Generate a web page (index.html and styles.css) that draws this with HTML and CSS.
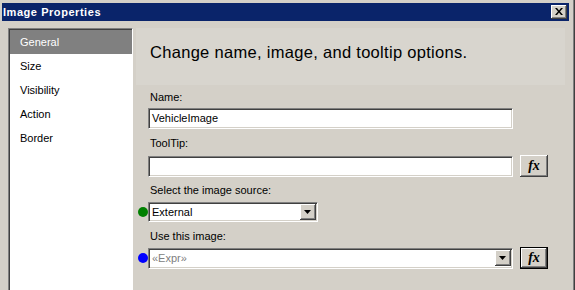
FILE: index.html
```html
<!DOCTYPE html>
<html>
<head>
<meta charset="utf-8">
<link rel="stylesheet" href="styles.css">
</head>
<body>
<div class="window">
  <div class="titlebar">
    <span class="title">Image Properties</span>
    <span class="close"><svg width="8" height="7" viewBox="0 0 8 7"><path d="M0 0h2l2 2.5L6 0h2L5 3.5 8 7H6L4 4.5 2 7H0l3-3.5z" fill="#000"/></svg></span>
  </div>
  <div class="main">
    <ul class="nav">
      <li class="active">General</li>
      <li>Size</li>
      <li>Visibility</li>
      <li>Action</li>
      <li>Border</li>
    </ul>
    <div class="panel">
      <div class="header"><h1>Change name, image, and tooltip options.</h1></div>
      <div class="form">
        <div class="lbl lbl-name">Name:</div>
        <div class="row row-name"><div class="text wide">VehicleImage</div></div>
        <div class="lbl lbl-gap7">ToolTip:</div>
        <div class="row row-gap5"><div class="text wide"></div><div class="fx">fx</div></div>
        <div class="lbl lbl-gap6">Select the image source:</div>
        <div class="row row-gap5">
          <span class="dot green"></span>
          <div class="combo narrow"><span class="val">External</span><span class="drop"><svg width="7" height="4" viewBox="0 0 7 4"><path d="M0 0h7L3.5 4z" fill="#000"/></svg></span></div>
        </div>
        <div class="lbl lbl-gap7">Use this image:</div>
        <div class="row row-gap4">
          <span class="dot blue"></span>
          <div class="combo wide"><span class="val muted">«Expr»</span><span class="drop"><svg width="7" height="4" viewBox="0 0 7 4"><path d="M0 0h7L3.5 4z" fill="#000"/></svg></span></div>
          <div class="fx default">fx</div>
        </div>
      </div>
    </div>
  </div>
</div>
</body>
</html>
```
FILE: styles.css
```css
html, body {
  margin: 0;
  padding: 0;
}
body {
  background: #d4d0c8;
  font: 11px "Liberation Sans", Arial, sans-serif;
  color: #000;
  overflow: hidden;
}
.window {
  width: 575px;
  height: 290px;
  box-sizing: border-box;
  padding: 3px 6px 0 2px;
  box-shadow: inset -1px 0 #404040, inset -2px 0 #808080;
  display: flex;
  flex-direction: column;
}
.titlebar {
  height: 18px;
  background: #0a246a;
  display: flex;
  align-items: center;
  justify-content: space-between;
  padding: 0 2px 0 1px;
}
.title {
  color: #fff;
  font-weight: bold;
  font-size: 11px;
  letter-spacing: 0.55px;
}
.close {
  width: 16px;
  height: 14px;
  box-sizing: border-box;
  background: #d4d0c8;
  box-shadow: inset -1px -1px #404040, inset 1px 1px #fff, inset -2px -2px #808080;
  display: flex;
  align-items: center;
  justify-content: center;
  padding: 0 1px 1px 0;
}
.close svg { display: block; }
.main {
  flex: 1;
  display: flex;
  margin-top: 7px;
  padding-left: 6px;
}
.nav {
  width: 125px;
  box-sizing: border-box;
  margin: 0;
  padding: 1px 0 0 1px;
  list-style: none;
  background: #fff;
  border-top: 1px solid #808080;
  border-left: 1px solid #808080;
  border-right: 1px solid #fff;
  box-shadow: inset 1px 1px #404040;
}
.nav li {
  height: 24px;
  line-height: 24px;
  padding-left: 10px;
}
.nav li.active {
  background: #808080;
  color: #fff;
}
.panel {
  flex: 1;
  margin: 0 4px 0 3px;
}
.header {
  height: 57px;
  box-sizing: border-box;
  background: #d8d5ce;
  padding: 14px 0 0 14px;
}
.header h1 {
  margin: 0;
  font-weight: normal;
  font-size: 16.5px;
  line-height: 20px;
  letter-spacing: 0.3px;
}
.form {
  padding-left: 12px;
}
.lbl {
  line-height: 14px;
  padding-left: 2px;
}
.lbl-name { margin-top: 5px; }
.lbl-gap7 { margin-top: 7px; }
.lbl-gap6 { margin-top: 6px; }
.row {
  display: flex;
  align-items: center;
}
.row-name { margin-top: 4px; }
.row-gap5 { margin-top: 5px; }
.row-gap4 { margin-top: 4px; }
.text, .combo {
  box-sizing: border-box;
  height: 21px;
  background: #fff;
  border: 1px solid;
  border-color: #808080 #fff #fff #808080;
  box-shadow: inset 1px 1px #404040, inset -1px -1px #d4d0c8;
  padding: 0 0 0 3px;
  line-height: 19px;
  display: flex;
  align-items: center;
}
.wide { width: 365px; }
.narrow { width: 170px; height: 20px; }
.combo .val { flex: 1; }
.muted { color: #808080; }
.drop {
  width: 16px;
  height: 16px;
  box-sizing: border-box;
  background: #d4d0c8;
  box-shadow: inset -1px -1px #404040, inset 1px 1px #fff, inset -2px -2px #808080;
  display: flex;
  align-items: center;
  justify-content: center;
  margin-right: 1px;
  padding: 0 1px 0 0;
}
.drop svg { display: block; }
.fx {
  width: 28px;
  height: 22px;
  box-sizing: border-box;
  margin-left: 7px;
  background: #d4d0c8;
  box-shadow: inset -1px -1px #404040, inset 1px 1px #fff, inset -2px -2px #808080;
  display: flex;
  align-items: center;
  justify-content: center;
  font: italic bold 14px "Liberation Serif", "Times New Roman", serif;
  padding-bottom: 1px;
}
.fx.default {
  border: 1px solid #000;
}
.dot {
  width: 10px;
  height: 10px;
  border-radius: 50%;
  margin-left: -10px;
  margin-right: 0;
}
.green { background: #008000; }
.blue { background: #0000ff; }
```
